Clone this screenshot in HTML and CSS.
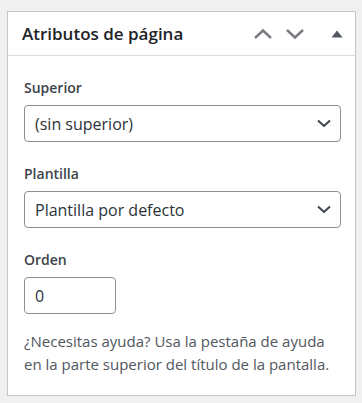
FILE: index.html
```html
<!DOCTYPE html>
<html lang="es">

<head>
    <meta charset="UTF-8">
    <meta name="viewport" content="width=device-width, initial-scale=1.0">
    <title>Atributos de página</title>
    <link rel="stylesheet" href="styles.css">
</head>

<body>
    <div class="postbox">
        <div class="postbox-header">
            <h2>Atributos de página</h2>
            <div class="handle-actions">
                <button class="handle" aria-label="Mover arriba">
                    <svg width="20" height="12" viewBox="0 0 20 12"><path d="M2 10 L10 2.5 L18 10" fill="none" stroke="#787c82" stroke-width="2.4"/></svg>
                </button>
                <button class="handle" aria-label="Mover abajo">
                    <svg width="20" height="12" viewBox="0 0 20 12"><path d="M2 2 L10 9.5 L18 2" fill="none" stroke="#787c82" stroke-width="2.4"/></svg>
                </button>
                <button class="handle toggle" aria-label="Cerrar">
                    <svg width="12" height="8" viewBox="0 0 12 8"><path d="M0.5 7.5 L6 0.5 L11.5 7.5 Z" fill="#50575e"/></svg>
                </button>
            </div>
        </div>

        <div class="inside">
            <p class="field-label">Superior</p>
            <div class="select-wrap">
                <select>
                    <option>(sin superior)</option>
                </select>
                <svg class="arrow" width="16" height="10" viewBox="0 0 16 10"><path d="M2 2.5 L8 8 L14 2.5" fill="none" stroke="#3c434a" stroke-width="2"/></svg>
            </div>

            <p class="field-label">Plantilla</p>
            <div class="select-wrap">
                <select>
                    <option>Plantilla por defecto</option>
                </select>
                <svg class="arrow" width="16" height="10" viewBox="0 0 16 10"><path d="M2 2.5 L8 8 L14 2.5" fill="none" stroke="#3c434a" stroke-width="2"/></svg>
            </div>

            <p class="field-label">Orden</p>
            <input type="text" class="order" value="0">

            <p class="help">¿Necesitas ayuda? Usa la pestaña de ayuda en la parte superior del título de la pantalla.</p>
        </div>
    </div>
</body>

</html>
```

FILE: styles.css
```css
* {
    box-sizing: border-box;
}

body {
    margin: 0;
    padding: 11px 6px 0 7px;
    background-color: #f0f0f1;
    font-family: "Open Sans", "Noto Sans", sans-serif;
    color: #1d2327;
}

.postbox {
    background-color: #fff;
    border: 1px solid #c3c4c7;
    height: 385px;
}

.postbox-header {
    display: flex;
    align-items: center;
    justify-content: space-between;
    height: 44px;
    border-bottom: 1px solid #dcdcde;
    padding: 0 12px 0 14px;
}

.postbox-header h2 {
    margin: 0;
    font-size: 17px;
    font-weight: 600;
    color: #1d2327;
}

.handle-actions {
    display: flex;
    align-items: center;
    gap: 12px;
}

.handle {
    display: flex;
    align-items: center;
    justify-content: center;
    padding: 0;
    border: none;
    background: none;
}

.handle.toggle {
    margin-left: 14px;
}

.inside {
    padding: 12px 16px 0 16px;
}

.field-label {
    margin: 10px 0 8px 0;
    font-size: 14px;
    font-weight: 600;
    color: #3c434a;
}

.select-wrap {
    position: relative;
    width: 317px;
    margin-bottom: 22px;
}

.select-wrap select {
    width: 100%;
    height: 37px;
    padding: 0 30px 0 10px;
    border: 1px solid #8c8f94;
    border-radius: 4px;
    background-color: #fff;
    appearance: none;
    font-family: inherit;
    font-size: 16px;
    color: #2c3338;
}

.select-wrap .arrow {
    position: absolute;
    right: 9px;
    top: 13px;
    pointer-events: none;
}

.order {
    width: 92px;
    height: 37px;
    padding: 0 10px;
    border: 1px solid #8c8f94;
    border-radius: 4px;
    font-family: inherit;
    font-size: 16px;
    color: #2c3338;
}

.help {
    margin: 16px 0 0 0;
    font-size: 15px;
    line-height: 23px;
    color: #50575e;
}
```
